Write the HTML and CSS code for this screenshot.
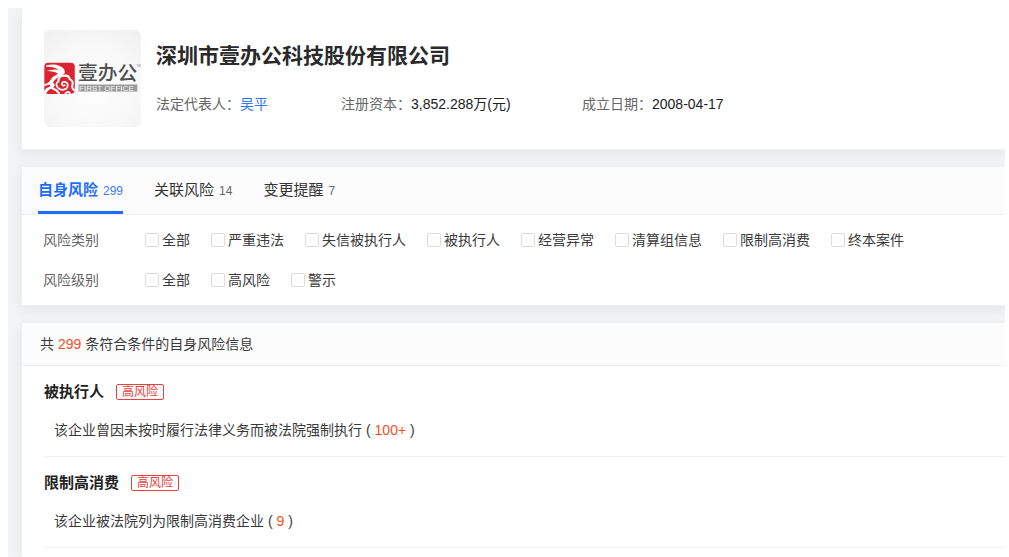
FILE: index.html
```html
<!DOCTYPE html>
<html lang="zh-CN">
<head>
<meta charset="utf-8">
<title>深圳市壹办公科技股份有限公司</title>
<link rel="stylesheet" href="styles.css">
</head>
<body>
<main class="page">
  <section class="card company">
    <svg class="logo" viewBox="0 0 290 290" role="img" aria-label="壹办公">
      <defs>
        <radialGradient id="plate" cx="50%" cy="60%" r="75%">
          <stop offset="0" stop-color="#fefefe"/>
          <stop offset=".6" stop-color="#f8f8f8"/>
          <stop offset="1" stop-color="#f0f0f0"/>
        </radialGradient>
      </defs>
      <rect width="290" height="290" rx="17" fill="url(#plate)"/>
      <rect x="1" y="98" width="91" height="93" rx="12" fill="#dc2430"/>
      <path fill="#fff" d="M6 106Q42 97 60 117Q67 129 54 136Q34 143 27 157Q38 166 25 175Q14 176 8 187L1 190V183Q5 173 17 170Q22 164 13 164L1 168V161Q13 161 18 151Q26 138 42 131Q29 122 5 123Q25 116 44 119Q30 109 6 110Z"/>
      <g fill="none" stroke="#fff" stroke-linecap="round">
        <path d="M43 154Q43 137 58 137Q74 134 77 147Q90 153 84 168Q84 176 90 180" stroke-width="6"/>
        <path d="M43 153Q32 161 41 172Q54 184 67 175Q76 162 66 156Q55 152 53 162Q56 168 62 165" stroke-width="5"/>
        <path d="M26 175Q39 179 45 190M64 190Q72 181 78 190" stroke-width="6"/>
      </g>
      <text class="logo-name" x="102" y="150">壹办公</text>
      <text class="logo-mark" x="276" y="111">TM</text>
      <rect x="103" y="163" width="176" height="21" fill="#999"/>
      <text class="logo-sub" x="105" y="182">FIRST OFFICE</text>
    </svg>
    <div class="company-body">
      <h1 class="company-name">深圳市壹办公科技股份有限公司</h1>
      <dl class="facts">
        <div class="fact"><dt>法定代表人：</dt><dd><a href="#person">吴平</a></dd></div>
        <div class="fact"><dt>注册资本：</dt><dd>3,852.288万(元)</dd></div>
        <div class="fact"><dt>成立日期：</dt><dd>2008-04-17</dd></div>
      </dl>
    </div>
  </section>

  <section class="card">
    <nav class="tabs">
      <a class="tab active" href="#self">自身风险 <span class="count">299</span></a>
      <a class="tab" href="#related">关联风险 <span class="count">14</span></a>
      <a class="tab" href="#changes">变更提醒 <span class="count">7</span></a>
    </nav>
    <form class="filters">
      <div class="filter" role="group" aria-labelledby="kind">
        <span class="filter-name" id="kind">风险类别</span>
        <div class="options">
          <label class="option"><input type="checkbox">全部</label>
          <label class="option"><input type="checkbox">严重违法</label>
          <label class="option"><input type="checkbox">失信被执行人</label>
          <label class="option"><input type="checkbox">被执行人</label>
          <label class="option"><input type="checkbox">经营异常</label>
          <label class="option"><input type="checkbox">清算组信息</label>
          <label class="option"><input type="checkbox">限制高消费</label>
          <label class="option"><input type="checkbox">终本案件</label>
        </div>
      </div>
      <div class="filter" role="group" aria-labelledby="level">
        <span class="filter-name" id="level">风险级别</span>
        <div class="options">
          <label class="option"><input type="checkbox">全部</label>
          <label class="option"><input type="checkbox">高风险</label>
          <label class="option"><input type="checkbox">警示</label>
        </div>
      </div>
    </form>
  </section>

  <section class="card results">
    <p class="summary">共 <span class="number">299</span> 条符合条件的自身风险信息</p>
    <article class="risk">
      <h2 class="risk-title">被执行人 <span class="tag">高风险</span></h2>
      <p class="risk-text">该企业曾因未按时履行法律义务而被法院强制执行<span class="amount">( <span class="number">100+</span> )</span></p>
    </article>
    <article class="risk">
      <h2 class="risk-title">限制高消费 <span class="tag">高风险</span></h2>
      <p class="risk-text">该企业被法院列为限制高消费企业<span class="amount">( <span class="number">9</span> )</span></p>
    </article>
  </section>
</main>
</body>
</html>
```
FILE: styles.css
```css
* {
  box-sizing: border-box;
}

body {
  margin: 0;
  padding: 8px 4px 0 8px;
  background: #fff;
  color: #3a3a3a;
  font: 14px/20px "Liberation Sans", "Noto Sans CJK SC", sans-serif;
}

h1, h2, p, dl, dd {
  margin: 0;
}

a {
  color: #2f73ff;
  text-decoration: none;
}

.page {
  display: flex;
  flex-direction: column;
  gap: 16px;
  padding-left: 13px;
  background: #f3f4f5;
  overflow: hidden;
}

.card {
  border: 1px solid #eeeff0;
  border-right: 0;
  background: #fff;
  box-shadow: 0 4px 12px rgba(30, 35, 60, 0.07);
}

.company {
  display: flex;
  gap: 15px;
  padding: 22px;
  border-top: 0;
}

.logo {
  flex: none;
  width: 97px;
  height: 97px;
}

.logo-name {
  fill: #505050;
  font: 500 59px "Noto Sans CJK SC", sans-serif;
}

.logo-mark {
  fill: #888;
  font: 9px "Liberation Sans", sans-serif;
}

.logo-sub {
  fill: #f5f5f5;
  font: 24px "Liberation Sans", sans-serif;
}

.company-name {
  padding-top: 11px;
  color: #2a2a2a;
  font-size: 21px;
  line-height: 30px;
}

.company-body {
  flex: 1;
}

.facts {
  display: grid;
  grid-template-columns: 185px 241px 1fr;
  margin-top: 23px;
}

.fact {
  display: flex;
}

.fact dt {
  color: #666;
}

.fact dd {
  color: #222;
}

.tabs {
  display: flex;
  gap: 31px;
  padding-left: 16px;
  border-bottom: 1px solid #eeeff0;
  background: #fcfcfc;
}

.tab {
  display: flex;
  align-items: baseline;
  gap: 5px;
  padding: 11px 0 8px;
  border-bottom: 3px solid transparent;
  color: #333;
  font-size: 15px;
  line-height: 23px;
}

.count {
  color: #666;
  font-size: 12px;
}

.tab.active {
  border-color: #1f6bff;
  color: #1f6bff;
  font-weight: bold;
}

.tab.active .count {
  color: #3f7bf5;
  font-weight: normal;
}

.filters {
  display: flex;
  flex-direction: column;
  gap: 20px;
  padding: 15px 21px;
}

.filter {
  display: flex;
}

.filter-name {
  width: 102px;
  color: #666;
}

.options {
  display: flex;
  gap: 21px;
}

.option {
  display: flex;
  align-items: center;
  gap: 3px;
}

.option input {
  appearance: none;
  width: 14px;
  height: 14px;
  margin: 0;
  border: 1px solid #ddd;
  border-radius: 2px;
  background: #fff;
}

.option input:checked {
  background: #1f6bff;
}

.results {
  padding-bottom: 9px;
}

.summary {
  padding: 11px 18px;
  border-bottom: 1px solid #eeeff0;
  background: #fcfcfc;
}

.number {
  color: #f5501e;
}

.risk {
  margin-left: 22px;
  padding: 14px 0 16px;
  border-bottom: 1px solid #f0f0f0;
}

.risk-title {
  display: flex;
  align-items: center;
  gap: 12px;
  color: #222;
  font-size: 15px;
  line-height: 24px;
}

.tag {
  padding: 0 5px;
  border: 1px solid #e8403c;
  border-radius: 2px;
  color: #e8403c;
  font-size: 12px;
  font-weight: normal;
  line-height: 14px;
}

.risk-text {
  margin-top: 16px;
  padding-left: 10px;
}

.amount {
  margin-left: 4px;
}
```
